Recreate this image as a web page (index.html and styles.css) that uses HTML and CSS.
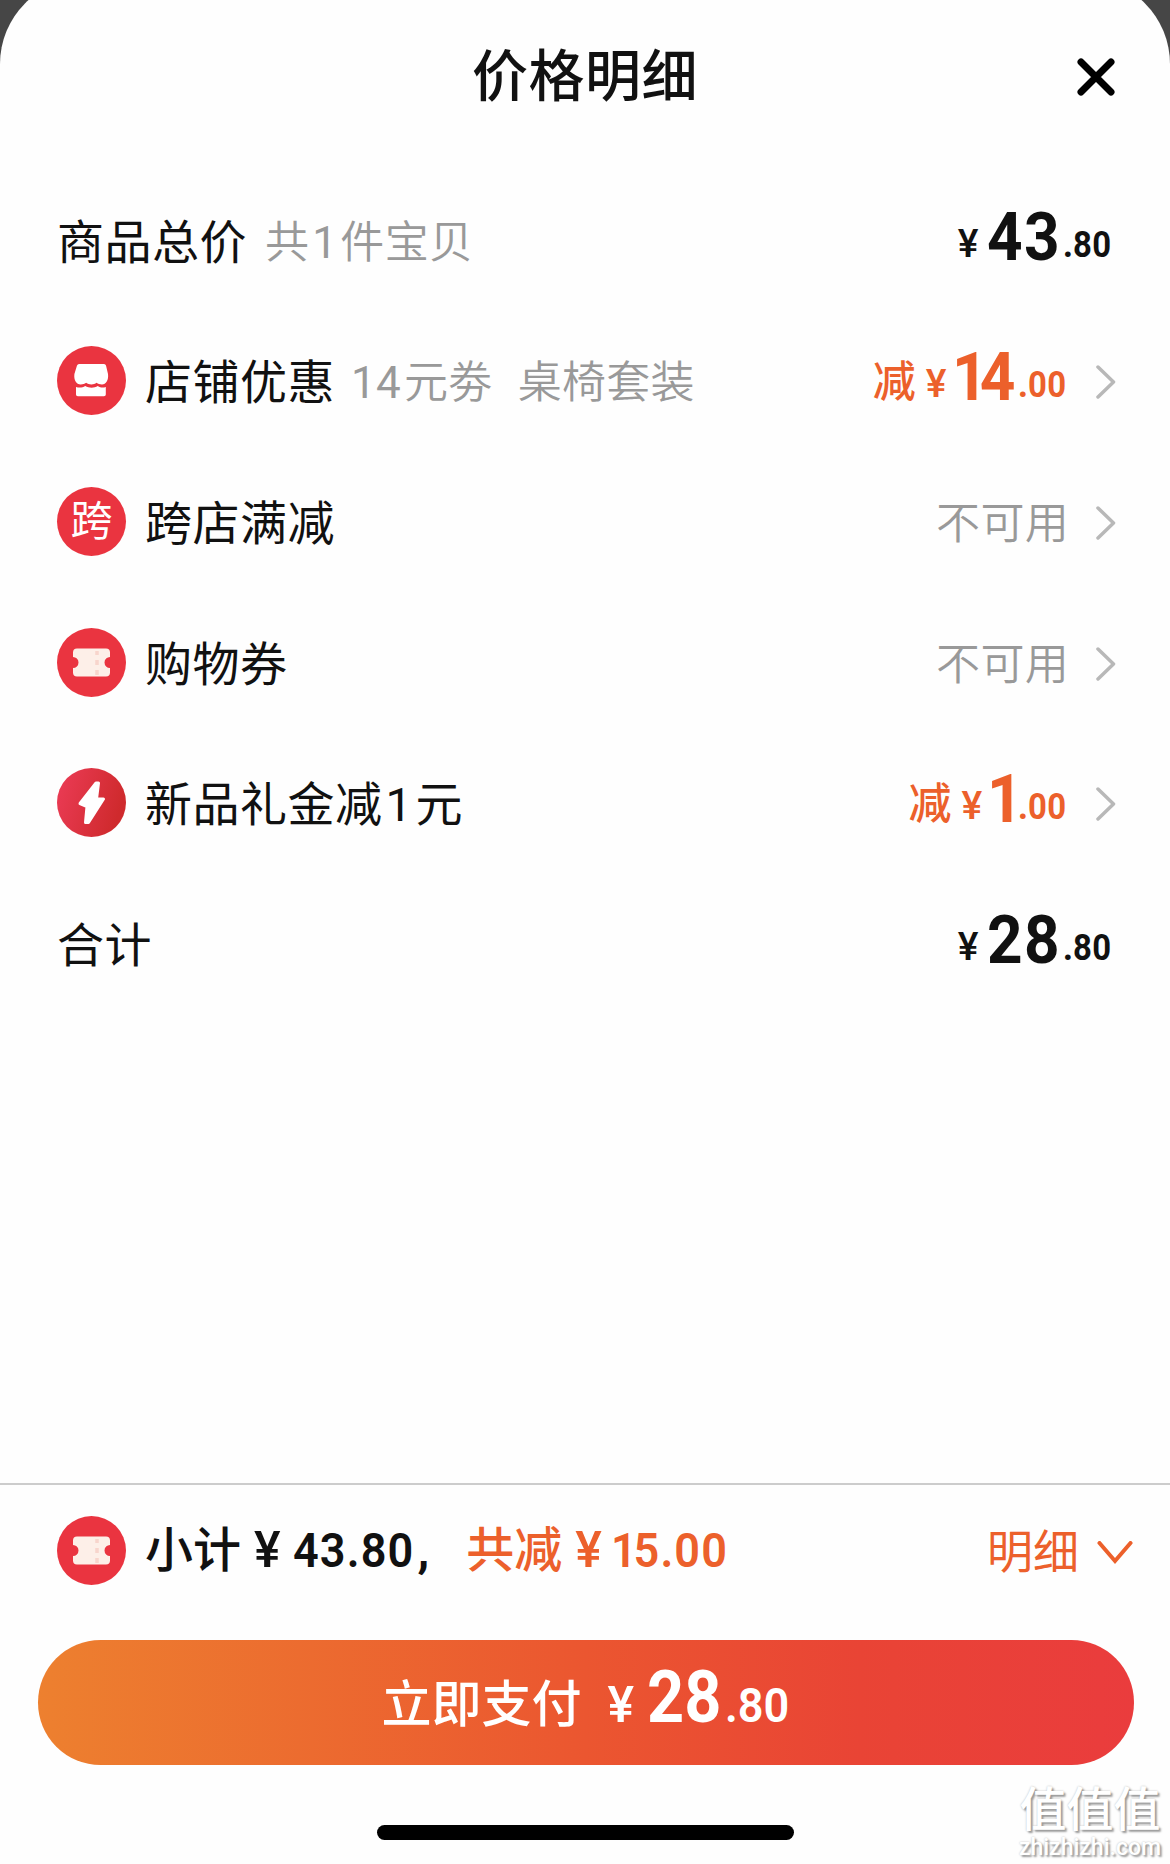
FILE: index.html
```
<!DOCTYPE html>
<html lang="zh-CN">
<head>
    <meta charset="UTF-8">
    <meta name="viewport" content="width=device-width, initial-scale=1.0">
    <title>价格明细</title>
    <link rel="stylesheet" href="styles.css">
</head>
<body>
    <div class="sheet">
        <header class="sheet-header">
            <h1>价格明细</h1>
            <svg class="close" viewBox="0 0 38 38"><path d="M4 4L34 34M34 4L4 34"/></svg>
        </header>

        <main class="rows">
            <div class="row">
                <span class="label">商品总价</span>
                <span class="note">共<span class="num">1</span>件宝贝</span>
                <div class="price">
                    <span class="yen">¥</span><span class="int">43</span><span class="dot">.</span><span class="dec">80</span>
                </div>
            </div>

            <div class="row">
                <svg class="icon" viewBox="0 0 69 69">
                    <circle cx="34.5" cy="34.5" r="34.5" fill="#ea3440"/>
                    <path d="M22 18h25q1.500 0 2 1.500l2 8.500c.8 6-2 10.500-6 10.500-2.300 0-4-.6-5.400-1.700-1.600 1.200-3.200 1.700-5.200 1.700s-3.700-.5-5.300-1.700c-1.500 1.100-3.200 1.700-5.400 1.700-4.300 0-7.100-4.500-6.300-10.500l2.600-8.500q.6-1.500 2-1.500z" fill="#fff"/>
                    <path d="M19 41c3.500 1 6.500.7 9.200-1 4 2.200 8.800 2.200 12.600 0 2.600 1.700 5 2 8 1v7.500q0 1.800-1.800 1.800H20.800q-1.800 0-1.800-1.800z" fill="#fff"/>
                </svg>
                <span class="label">店铺优惠</span>
                <span class="note"><span class="num first">14</span>元劵<span class="gap"></span>桌椅套装</span>
                <div class="price minus">
                    <span class="cut">减</span><span class="yen">¥</span><span class="int narrow"><span class="one">1</span>4</span><span class="dot">.</span><span class="dec">00</span>
                </div>
                <svg class="arrow" viewBox="0 0 20 34"><path d="M2 2L17.500 17 2 32"/></svg>
            </div>

            <div class="row">
                <span class="icon icon-text">跨</span>
                <span class="label">跨店满减</span>
                <span class="disabled">不可用</span>
                <svg class="arrow" viewBox="0 0 20 34"><path d="M2 2L17.500 17 2 32"/></svg>
            </div>

            <div class="row">
                <svg class="icon" viewBox="0 0 69 69">
                    <circle cx="34.5" cy="34.5" r="34.5" fill="#ea3440"/>
                    <path d="M20 20.500h29q4 0 4 4v4.500a5.500 5.500 0 0 0 0 11v4.500q0 4-4 4h-29q-4 0-4-4v-4.500a5.500 5.500 0 0 0 0-11v-4.500q0-4 4-4z" fill="#fdefe8"/>
                    <path d="M40 23v4M40 32v5M40 42v5" stroke="#f8d5cc" stroke-width="3.500"/>
                </svg>
                <span class="label">购物券</span>
                <span class="disabled">不可用</span>
                <svg class="arrow" viewBox="0 0 20 34"><path d="M2 2L17.500 17 2 32"/></svg>
            </div>

            <div class="row">
                <svg class="icon" viewBox="0 0 69 69">
                    <defs>
                        <linearGradient id="flash" x1="0" y1="0" x2="1" y2="0.3">
                            <stop offset="0" stop-color="#ec3c57"/>
                            <stop offset="1" stop-color="#cf2a2d"/>
                        </linearGradient>
                    </defs>
                    <circle cx="34.5" cy="34.5" r="34.5" fill="url(#flash)"/>
                    <path d="M39 15L41.500 15 39.500 31H46.500L31.500 54.500H28.500L30 38.500 23 35.500z" fill="#fff" stroke="#fff" stroke-width="3" stroke-linejoin="round"/>
                </svg>
                <span class="label">新品礼金减<span class="num">1</span>元</span>
                <div class="price minus">
                    <span class="cut">减</span><span class="yen">¥</span><span class="int narrow single"><span class="one">1</span></span><span class="dot">.</span><span class="dec">00</span>
                </div>
                <svg class="arrow" viewBox="0 0 20 34"><path d="M2 2L17.500 17 2 32"/></svg>
            </div>

            <div class="row">
                <span class="label">合计</span>
                <div class="price">
                    <span class="yen">¥</span><span class="int">28</span><span class="dot">.</span><span class="dec">80</span>
                </div>
            </div>
        </main>

        <footer class="footer">
            <div class="summary">
                <svg class="icon" viewBox="0 0 69 69">
                    <circle cx="34.5" cy="34.5" r="34.5" fill="#ea3440"/>
                    <path d="M20 20.500h29q4 0 4 4v4.500a5.500 5.500 0 0 0 0 11v4.500q0 4-4 4h-29q-4 0-4-4v-4.500a5.500 5.500 0 0 0 0-11v-4.500q0-4 4-4z" fill="#fdefe8"/>
                    <path d="M40 23v4M40 32v5M40 42v5" stroke="#f8d5cc" stroke-width="3.500"/>
                </svg>
                <span class="subtotal">小计<span class="sum-yen">¥</span><span class="sum-num">43.80</span><span class="comma">,</span></span>
                <span class="saved">共减<span class="sum-yen">¥</span><span class="sum-num narrow"><span class="one">1</span>5.00</span></span>
                <span class="detail">明细</span>
                <svg class="arrow-down" viewBox="0 0 36 24"><path d="M2.500 2L18 20 33.500 2"/></svg>
            </div>

            <button class="pay-btn">
                <span class="pay-text">立即支付</span><span class="pay-yen">¥</span><span class="pay-int">28</span><span class="pay-dec">.80</span>
            </button>

            <div class="home-bar"></div>
        </footer>
    </div>

    <!-- Водяной знак -->
    <div class="watermark">
        <div class="wm-title">值值值</div>
        <div class="wm-site">zhizhizhi.com</div>
    </div>
</body>
</html>
```
FILE: styles.css
```
* {
    margin: 0;
    padding: 0;
    box-sizing: border-box;
}

body {
    background-color: #464646;
    color: #111;
    font-family: Roboto, "Noto Sans CJK SC", sans-serif;
    height: 1864px;
    overflow: hidden;
}

.sheet {
    display: flex;
    flex-direction: column;
    height: 1886px;
    margin-top: -22px;
    padding-top: 22px;
    background: #fefefe;
    border-radius: 86px 86px 0 0;
}

/* Шапка */
.sheet-header {
    display: flex;
    align-items: center;
    height: 153px;
    padding: 0 55px 0 93px;
}

.sheet-header h1 {
    flex: 1;
    padding-top: 1px;
    text-align: center;
    font-size: 56px;
    font-weight: 500;
    line-height: 80px;
    letter-spacing: 0.5px;
}

.close {
    width: 38px;
    height: 38px;
    fill: none;
    stroke: #000;
    stroke-width: 7;
    stroke-linecap: round;
}

/* Строки */
.rows {
    flex: 1;
    padding: 17px 54px 0 57px;
}

.row {
    display: flex;
    align-items: center;
    height: 140.6px;
}

.icon {
    flex: none;
    width: 69px;
    height: 69px;
    margin-right: 19px;
}

.icon-text {
    padding-top: 1px;
    border-radius: 50%;
    background: #ea3440;
    color: #fff;
    font-size: 42px;
    line-height: 68px;
    text-align: center;
}

.label {
    padding-top: 5px;
    font-size: 47px;
    line-height: 60px;
    letter-spacing: 0.5px;
}

.note,
.disabled {
    padding-top: 5px;
    color: #999;
    font-size: 44px;
    font-weight: 350;
    line-height: 60px;
    letter-spacing: 0.3px;
}

.note {
    margin-left: 18px;
}

.disabled {
    margin-left: auto;
}

.num {
    margin: 0 3px;
    font-weight: 400;
}

.num.first {
    margin-left: -2px;
}

.gap {
    display: inline-block;
    width: 25px;
}

.arrow {
    width: 20px;
    height: 34px;
    margin: 3px 0 0 29px;
    fill: none;
    stroke: #b8b8b8;
    stroke-width: 3.5;
    stroke-linecap: round;
    stroke-linejoin: round;
}

.disabled + .arrow {
    margin-left: 27px;
}

/* Цены */
.price {
    display: flex;
    align-items: baseline;
    margin: -2px 0 0 auto;
    font-weight: 700;
    line-height: 80px;
}

.price:last-child {
    margin-right: 4px;
}

.minus {
    color: #ec602b;
}

.cut {
    font-size: 43px;
    font-weight: 500;
}

.yen {
    margin: 0 9px 0 10px;
    font-size: 39px;
    font-weight: 500;
}

/* Узкие цифры */
.int {
    margin-right: -6.4px;
    font-size: 67.5px;
    letter-spacing: 1.4px;
    transform: translateY(3px) scaleX(0.92);
    transform-origin: left;
}

.int.narrow {
    margin-left: -4px;
    margin-right: -5.6px;
}

.int.single {
    margin-right: -1px;
}

.int .one {
    letter-spacing: -8.5px;
}

.dot {
    margin-left: 1.5px;
    font-size: 36px;
}

.dec {
    margin-right: -4px;
    font-size: 36.5px;
    letter-spacing: 0.4px;
    transform: scaleX(0.9);
    transform-origin: left;
}

/* Низ */
.footer {
    height: 381px;
    border-top: 2px solid #ccc;
}

.summary {
    display: flex;
    align-items: center;
    height: 131px;
    padding: 0 37px 0 57px;
}

.subtotal,
.saved {
    font-size: 48px;
    font-weight: 500;
    line-height: 60px;
    white-space: nowrap;
}

.saved {
    margin-left: 37px;
    color: #ec602b;
}

.sum-yen {
    margin: 0 12px 0 13px;
    font-size: 50px;
}

.sum-num {
    display: inline-block;
    margin-right: -11px;
    font-size: 49px;
    font-weight: 600;
    letter-spacing: 1.2px;
    transform: scaleX(0.92);
    transform-origin: left;
}

.sum-num.narrow {
    margin-left: -3px;
}

.sum-num .one {
    letter-spacing: -3.5px;
}

.comma {
    margin-left: 4px;
    font-weight: 700;
}

.detail {
    padding-top: 2px;
    margin-left: auto;
    color: #ec602b;
    font-size: 46px;
    line-height: 60px;
}

.arrow-down {
    width: 36px;
    height: 24px;
    margin: 4px 0 0 18px;
    fill: none;
    stroke: #ec602b;
    stroke-width: 4;
    stroke-linecap: round;
}

.pay-btn {
    display: flex;
    justify-content: center;
    align-items: baseline;
    width: 1096px;
    height: 125px;
    margin: 24px 0 0 38px;
    padding-bottom: 10px;
    border: none;
    border-radius: 63px;
    background: linear-gradient(90deg, #ed802f, #eb5630 50%, #e94435 75%, #ea3c3d);
    color: #fff;
    font-family: inherit;
    font-weight: 500;
    line-height: 115px;
}

.pay-text {
    font-size: 50px;
}

.pay-yen {
    margin: 0 13px 0 26px;
    font-size: 50px;
}

.pay-int {
    margin-right: -8px;
    font-size: 72px;
    font-weight: 700;
    transform: scaleX(0.9);
    transform-origin: left;
}

.pay-dec {
    margin: 0 -4px 0 3px;
    font-size: 49px;
    font-weight: 600;
    transform: scaleX(0.92);
    transform-origin: left;
}

.home-bar {
    width: 417px;
    height: 15px;
    margin: 60px 0 0 377px;
    border-radius: 8px;
    background: #000;
}

.watermark {
    position: absolute;
    right: 9px;
    bottom: 3px;
    color: #fff;
    font-weight: 500;
    text-align: center;
    text-shadow: 2px 2px 2px #999, 0 0 2px #bbb;
}

.wm-title {
    font-size: 47px;
    line-height: 51px;
}

.wm-site {
    font-size: 23px;
    line-height: 26px;
}
```
